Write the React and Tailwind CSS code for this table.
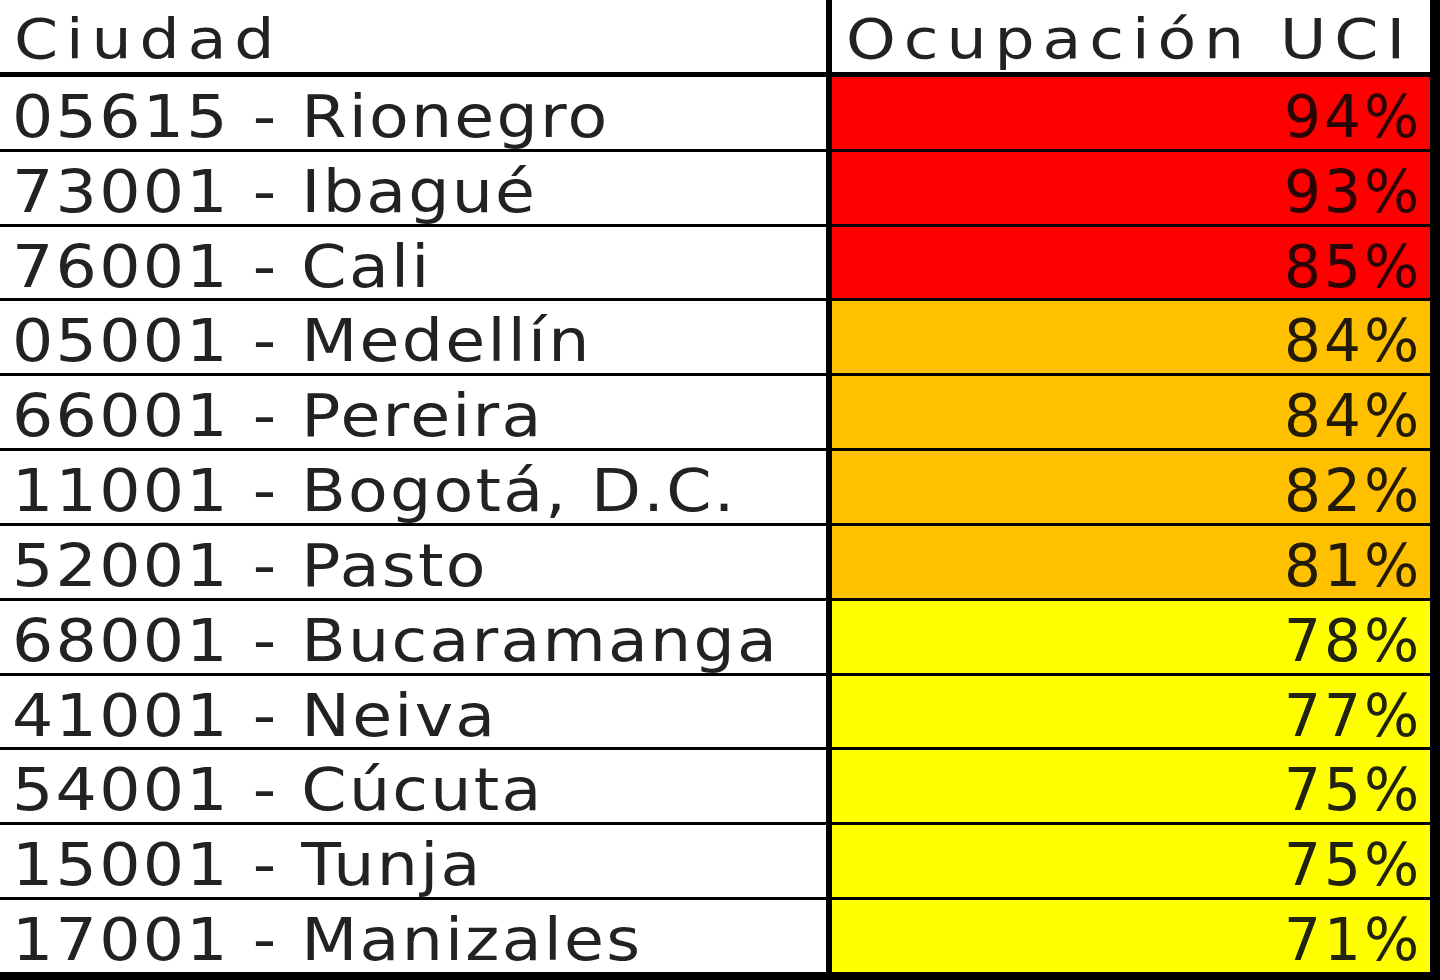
import React from "react";

const rows = [
  ["05615 - Rionegro", "94%", "red"],
  ["73001 - Ibagué", "93%", "red"],
  ["76001 - Cali", "85%", "red"],
  ["05001 - Medellín", "84%", "orange"],
  ["66001 - Pereira", "84%", "orange"],
  ["11001 - Bogotá, D.C.", "82%", "orange"],
  ["52001 - Pasto", "81%", "orange"],
  ["68001 - Bucaramanga", "78%", "yellow"],
  ["41001 - Neiva", "77%", "yellow"],
  ["54001 - Cúcuta", "75%", "yellow"],
  ["15001 - Tunja", "75%", "yellow"],
  ["17001 - Manizales", "71%", "yellow"],
];

const bg = {
  red: "bg-[#ff0000] text-[#2a0505]",
  orange: "bg-[#ffc000] text-[#231a08]",
  yellow: "bg-[#ffff00] text-[#222210]",
};

export default function App() {
  return (
    <div className="w-[1440px] h-[980px] bg-white flex flex-col border-r-[10px] border-black font-['DejaVu_Sans',sans-serif] text-[#222]">
      <div className="flex h-[77px] border-b-[5px] border-black shrink-0">
        <div className="w-[826px] flex items-center pl-[14px] pt-[6px] text-[56px] leading-none">
          <span className="inline-block origin-left scale-x-[1.13] tracking-[7px]">Ciudad</span>
        </div>
        <div className="flex-1 flex items-center pl-[14px] pt-[6px] border-l-[6px] border-black text-[56px] leading-none">
          <span className="inline-block origin-left scale-x-[1.13] tracking-[7px]">Ocupación UCI</span>
        </div>
      </div>
      {rows.map(([city, pct, c], i) => (
        <div
          key={i}
          className={`flex flex-1 ${i === rows.length - 1 ? "border-b-[8px]" : "border-b-[3px]"} border-black`}
        >
          <div className="w-[826px] flex items-center pl-[12px] pt-[8px] text-[58px] leading-none">
            <span className="inline-block origin-left scale-x-[1.12] tracking-[2px]">{city}</span>
          </div>
          <div
            className={`flex-1 flex items-center justify-end pr-[8px] pt-[8px] border-l-[6px] border-black text-[58px] tracking-[3px] leading-none ${bg[c]}`}
          >
            {pct}
          </div>
        </div>
      ))}
    </div>
  );
}
